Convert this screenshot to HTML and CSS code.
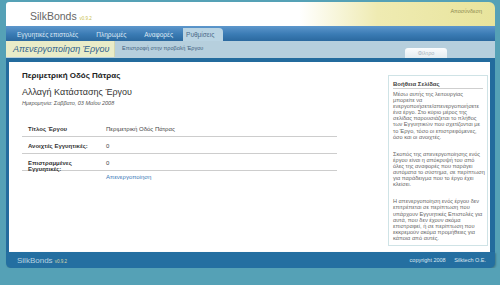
FILE: index.html
```html
<!DOCTYPE html>
<html lang="el">
<head>
    <meta charset="UTF-8">
    <title>SilkBonds - Απενεργοποίηση Έργου</title>
    <link rel="stylesheet" href="styles.css">
</head>
<body>
    <div class="page">
        <div class="header">
            <div class="logo">SilkBonds <span class="ver">v0.9.2</span></div>
            <a class="logout" href="#">Αποσύνδεση</a>
        </div>

        <ul class="nav">
            <li>Εγγυητικές επιστολές</li>
            <li>Πληρωμές</li>
            <li>Αναφορές</li>
            <li class="active">Ρυθμίσεις</li>
        </ul>

        <div class="subnav">
            <div class="page-title">Απενεργοποίηση Έργου</div>
            <a class="back" href="#">Επιστροφή στην προβολή Έργου</a>
            <span class="filter">Φίλτρο</span>
        </div>

        <div class="content">
            <div class="main">
                <h1>Περιμετρική Οδός Πάτρας</h1>
                <h2>Αλλαγή Κατάστασης Έργου</h2>
                <p class="date">Ημερομηνία: Σάββατο, 03 Μαΐου 2008</p>

                <div class="details">
                    <div class="row">
                        <div class="label">Τίτλος Έργου</div>
                        <div class="value">Περιμετρική Οδός Πάτρας</div>
                    </div>
                    <div class="row">
                        <div class="label">Ανοιχτές Εγγυητικές:</div>
                        <div class="value">0</div>
                    </div>
                    <div class="row">
                        <div class="label">Επιστραμμένες Εγγυητικές:</div>
                        <div class="value">0</div>
                    </div>
                </div>
                <a class="action" href="#">Απενεργοποίηση</a>
            </div>

            <div class="help">
                <h3>Βοήθεια Σελίδας</h3>
                <p>Μέσω αυτής της λειτουργίας<br>μπορείτε να<br>ενεργοποιήσετε/απενεργοποιήσετε<br>ένα έργο. Στο κύριο μέρος της<br>σελίδας παρουσιάζεται το πλήθος<br>των Εγγυητικών που σχετίζονται με<br>το Έργο, τόσο οι επιστρεφόμενες,<br>όσο και οι ανοιχτές.</p>
                <p>Σκοπός της απενεργοποίησης ενός<br>έργου είναι η απόκρυψή του από<br>όλες της αναφορές που παράγει<br>αυτόματα το σύστημα, σε περίπτωση<br>για παράδειγμα που το έργο έχει<br>κλείσει.</p>
                <p>Η απενεργοποίηση ενός έργου δεν<br>επιτρέπεται σε περίπτωση που<br>υπάρχουν Εγγυητικές Επιστολές για<br>αυτά, που δεν έχουν ακόμα<br>επιστραφεί, ή σε περίπτωση που<br>εκκρεμούν ακόμα προμήθειες για<br>κάποια από αυτές.</p>
            </div>
        </div>

        <div class="footer">
            <div class="foot-logo">SilkBonds <span class="ver">v0.9.2</span></div>
            <div class="copy">copyright 2008 <span>Silktech O.E.</span></div>
        </div>
    </div>
</body>
</html>
```

FILE: styles.css
```css
body {
    margin: 0;
    background: #55a1b6;
    font-family: "Liberation Sans", Arial, sans-serif;
}

a {
    text-decoration: none;
}

.page {
    width: 489px;
    margin: 2px 0 0 6px;
}

/* шапка */
.header {
    height: 24px;
    display: flex;
    justify-content: space-between;
    align-items: flex-start;
    padding: 0 13px 0 24px;
    background: linear-gradient(to right, #fff 0%, #fff 60%, #efebb2 76%, #e8e49c 100%);
    border-radius: 3px 6px 0 0;
}

.logo {
    font-size: 10.5px;
    line-height: 12px;
    color: #666;
    margin-top: 8px;
}

.ver {
    font-size: 4.5px;
    color: #c9c04a;
}

.logout {
    font-size: 5.5px;
    line-height: 7px;
    color: #8c8a50;
    margin-top: 6px;
}

/* меню */
.nav {
    height: 15px;
    display: flex;
    align-items: flex-end;
    list-style: none;
    margin: 0;
    padding: 0 0 0 2px;
    background: linear-gradient(#5d97cc, #3a7bb4 55%, #2b699f);
}

.nav li {
    font-size: 6.5px;
    line-height: 13px;
    color: #dce8f4;
    padding: 0 9px 0 9px;
}

.nav li.active {
    background: #bad4e3;
    color: #4a6a88;
    padding: 0 9px 0 3px;
    margin-left: 1px;
    border-radius: 0 4px 0 0;
}

.subnav {
    height: 17px;
    display: flex;
    align-items: flex-start;
    background: #b6cfdd;
}

.page-title {
    width: 109px;
    height: 16px;
    box-sizing: border-box;
    padding-left: 7px;
    background: #e9ecc8;
    border-right: 1px solid #d3d6b0;
    font-size: 9px;
    line-height: 16px;
    font-style: italic;
    color: #2f5f8c;
}

.back {
    font-size: 5.5px;
    line-height: 6px;
    color: #40607e;
    margin: 4px 0 0 7px;
}

.filter {
    margin: 7px 48px 0 auto;
    width: 42px;
    height: 10px;
    font-size: 5.5px;
    line-height: 11px;
    text-align: center;
    color: #a8b4bc;
    background: linear-gradient(#fbfcfd, #e4ecf0);
    border-radius: 3px 3px 0 0;
}

/* контент */
.content {
    display: flex;
    justify-content: space-between;
    height: 194px;
    box-sizing: border-box;
    border: solid #236b9d;
    border-width: 4px 5px 0 3px;
    background: #fff;
    padding: 9px 2px 0 13px;
}

.main {
    width: 315px;
}

.main h1 {
    font-size: 8px;
    line-height: 10px;
    margin: 0;
    color: #222;
}

.main h2 {
    font-size: 9px;
    line-height: 11px;
    font-weight: normal;
    margin: 6px 0 0;
    color: #333;
}

.date {
    font-size: 5.5px;
    line-height: 8px;
    font-style: italic;
    margin: 1px 0 0;
    color: #555;
}

.details {
    margin-top: 13px;
}

.row {
    display: flex;
    height: 17px;
    box-sizing: border-box;
    padding-top: 6px;
    border-bottom: 1px solid #cdcdcd;
    font-size: 6px;
    line-height: 6px;
    color: #444;
}

.row .label {
    width: 84px;
    padding-left: 6px;
    padding-right: 10px;
    box-sizing: border-box;
    font-weight: bold;
    color: #333;
}

.action {
    display: block;
    margin: 3px 0 0 84px;
    font-size: 6px;
    line-height: 6px;
    color: #3a78b8;
}

/* помощь */
.help {
    width: 100px;
    box-sizing: border-box;
    align-self: flex-start;
    margin-top: 4px;
    border: 1px solid #cfe3e6;
    padding: 5px 4px 4px 4px;
}

.help h3 {
    margin: 0;
    font-size: 6px;
    line-height: 7px;
    color: #444;
    border-bottom: 1px solid #cfcfcf;
}

.help p {
    margin: 11px 0 0;
    font-size: 5.6px;
    line-height: 6.1px;
    color: #666;
    white-space: nowrap;
}

.help h3 + p {
    margin-top: 2px;
}

/* подвал */
.footer {
    height: 16px;
    display: flex;
    justify-content: space-between;
    align-items: center;
    padding: 0 9px 0 11px;
    background: #246fa1;
    border-radius: 0 0 5px 5px;
    box-shadow: 1px 1px 2px rgba(0, 0, 0, 0.25);
}

.foot-logo {
    font-size: 8px;
    color: #b8d4e2;
}

.foot-logo .ver {
    color: #d8d8a8;
}

.copy {
    font-size: 5.5px;
    color: #dbe7f0;
}

.copy span {
    margin-left: 7px;
}
```
